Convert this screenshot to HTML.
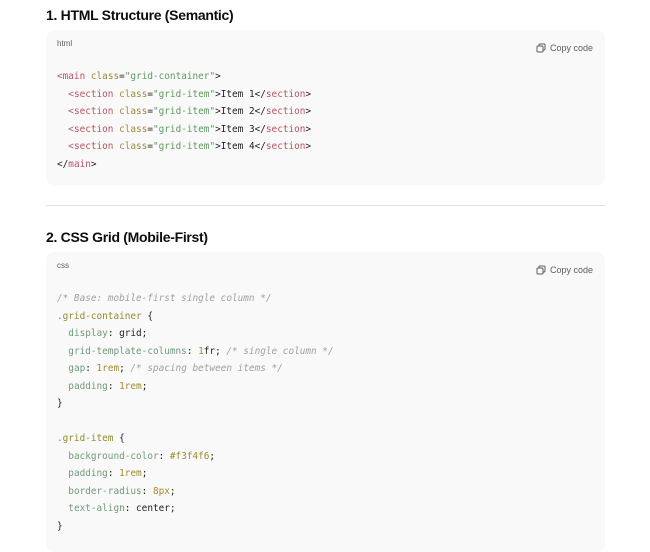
<!DOCTYPE html>
<html><head><style>
body{margin:0;background:#fff;width:650px;height:543px;overflow:hidden;font-family:"Liberation Sans",sans-serif;color:#0d0d0d}
h2{position:absolute;left:46px;margin:0;font-size:14px;font-weight:bold;letter-spacing:-0.3px}
.blk{position:absolute;left:46px;width:559px;background:#f9f9f9;border-radius:8px}
.lang{position:absolute;left:11px;top:9px;font-size:8px;color:#5d5d5d}
.copy{position:absolute;right:12px;top:13px;font-size:9px;color:#5d5d5d;display:flex;align-items:center;gap:4px}
pre{position:absolute;left:11px;margin:0;font-family:"DejaVu Sans Mono","Liberation Mono",monospace;font-size:9.4px;line-height:17.5px;color:#222;letter-spacing:0}
.t{color:#b85562}.a{color:#9a8a3a}.s{color:#5f9a5f}.c{color:#a0a0a0;font-style:italic}.p{color:#6f9a7a}.n{color:#a08a30}.sel{color:#8f8a30}
hr{position:absolute;left:46px;top:205px;width:559px;margin:0;border:0;border-top:1px solid #e3e3e3}
</style></head><body>
<h2 style="top:7px">1. HTML Structure (Semantic)</h2>
<div class="blk" style="top:30px;height:155px">
<div class="lang">html</div>
<div class="copy"><svg width="10" height="10" viewBox="0 0 10 10" fill="none" stroke="#5d5d5d" stroke-width="1"><rect x="1" y="3" width="6" height="6" rx="1"/><path d="M3 3V2a1 1 0 0 1 1-1h4a1 1 0 0 1 1 1v4a1 1 0 0 1-1 1H7"/></svg>Copy code</div>
<pre style="top:38px"><span class="t">&lt;main</span> <span class="a">class</span>=<span class="s">"grid-container"</span>&gt;
  <span class="t">&lt;section</span> <span class="a">class</span>=<span class="s">"grid-item"</span>&gt;Item 1&lt;/<span class="t">section</span>&gt;
  <span class="t">&lt;section</span> <span class="a">class</span>=<span class="s">"grid-item"</span>&gt;Item 2&lt;/<span class="t">section</span>&gt;
  <span class="t">&lt;section</span> <span class="a">class</span>=<span class="s">"grid-item"</span>&gt;Item 3&lt;/<span class="t">section</span>&gt;
  <span class="t">&lt;section</span> <span class="a">class</span>=<span class="s">"grid-item"</span>&gt;Item 4&lt;/<span class="t">section</span>&gt;
&lt;/<span class="t">main</span>&gt;</pre>
</div>
<hr>
<h2 style="top:229px">2. CSS Grid (Mobile-First)</h2>
<div class="blk" style="top:252px;height:300px">
<div class="lang">css</div>
<div class="copy"><svg width="10" height="10" viewBox="0 0 10 10" fill="none" stroke="#5d5d5d" stroke-width="1"><rect x="1" y="3" width="6" height="6" rx="1"/><path d="M3 3V2a1 1 0 0 1 1-1h4a1 1 0 0 1 1 1v4a1 1 0 0 1-1 1H7"/></svg>Copy code</div>
<pre style="top:38px"><span class="c">/* Base: mobile-first single column */</span>
<span class="sel">.grid-container</span> {
  <span class="p">display</span>: grid;
  <span class="p">grid-template-columns</span>: <span class="n">1</span>fr; <span class="c">/* single column */</span>
  <span class="p">gap</span>: <span class="n">1rem</span>; <span class="c">/* spacing between items */</span>
  <span class="p">padding</span>: <span class="n">1rem</span>;
}

<span class="sel">.grid-item</span> {
  <span class="p">background-color</span>: <span class="n">#f3f4f6</span>;
  <span class="p">padding</span>: <span class="n">1rem</span>;
  <span class="p">border-radius</span>: <span class="n">8px</span>;
  <span class="p">text-align</span>: center;
}</pre>
</div>
</body></html>
